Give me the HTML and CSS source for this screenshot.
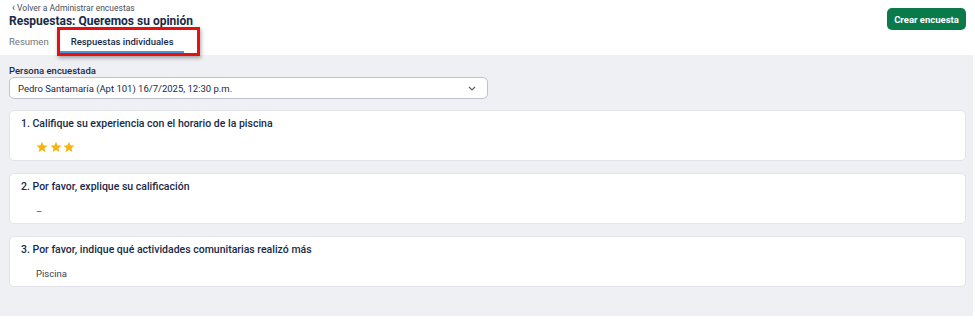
FILE: index.html
```html
<!DOCTYPE html>
<html lang="es">
<head>
<meta charset="utf-8">
<title>Respuestas: Queremos su opinión</title>
<link rel="stylesheet" href="styles.css">
</head>

<body>

<div id="page">
	<div class="header">
		<div class="header-top">
			<div class="header-text">
				<a class="back-link" href="#"><span class="back-chevron">&lsaquo;</span> Volver a Administrar encuestas</a>
				<h1 class="title">Respuestas: Queremos su opinión</h1>
			</div>
			<button class="button-create">Crear encuesta</button>
		</div>
		<ul class="tabs">
			<li class="tab">Resumen</li>
			<li class="tab tab-active"><span>Respuestas individuales</span></li>
		</ul>
	</div>

	<div class="content">
		<label class="field-label">Persona encuestada</label>
		<div class="select-box">
			<span>Pedro Santamaría (Apt 101) 16/7/2025, 12:30 p.m.</span>
			<svg class="chevron" width="8" height="5" viewBox="0 0 8 5"><path d="M1 1l3 3 3-3" fill="none" stroke="#5a6270" stroke-width="1.2"/></svg>
		</div>

		<div class="card">
			<h2 class="question">1. Califique su experiencia con el horario de la piscina</h2>
			<div class="answer stars">
				<svg width="12" height="12" viewBox="0 0 24 24"><path d="M12 1.5l3.1 7.1 7.7.7-5.8 5.1 1.7 7.6L12 18 5.3 22l1.7-7.6-5.8-5.1 7.7-.7z" fill="#f6b40e"/></svg>
				<svg width="12" height="12" viewBox="0 0 24 24"><path d="M12 1.5l3.1 7.1 7.7.7-5.8 5.1 1.7 7.6L12 18 5.3 22l1.7-7.6-5.8-5.1 7.7-.7z" fill="#f6b40e"/></svg>
				<svg width="12" height="12" viewBox="0 0 24 24"><path d="M12 1.5l3.1 7.1 7.7.7-5.8 5.1 1.7 7.6L12 18 5.3 22l1.7-7.6-5.8-5.1 7.7-.7z" fill="#f6b40e"/></svg>
			</div>
		</div>

		<div class="card">
			<h2 class="question">2. Por favor, explique su calificación</h2>
			<div class="answer answer-empty">–</div>
		</div>

		<div class="card">
			<h2 class="question">3. Por favor, indique qué actividades comunitarias realizó más</h2>
			<div class="answer">Piscina</div>
		</div>
	</div>
</div>

</body>
</html>
```

FILE: styles.css
```css
html {
	font-family: Roboto, 'Liberation Sans', sans-serif;
	color: rgb(24, 42, 70);
}

body {
	margin: 0;
	background-color: #fff;
}

#page {
	width: 973px;
	height: 316px;
	display: flex;
	flex-direction: column;
}

.header {
	padding: 0 7px 1px 9px;
	height: 55px;
	box-sizing: border-box;
	background-color: #fff;
}

.header-top {
	display: flex;
	justify-content: space-between;
	align-items: flex-start;
	height: 27px;
}

.header-text {
	display: flex;
	flex-direction: column;
}

.back-link {
	color: rgb(70, 78, 92);
	font-size: 8.5px;
	text-decoration: none;
	margin-top: 2px;
	line-height: 11px;
	padding-left: 3px;
}

.back-chevron {
	font-size: 10px;
}

.title {
	font-size: 12px;
	font-weight: bold;
	margin: 0;
	line-height: 14px;
}

.button-create {
	background-color: rgb(10, 122, 75);
	border: 0;
	border-radius: 5px;
	color: #fff;
	font-family: inherit;
	font-size: 9.5px;
	font-weight: bold;
	height: 22px;
	width: 79px;
	margin-top: 8px;
	padding: 0;
}

.tabs {
	display: flex;
	list-style: none;
	margin: 7px 0 0;
	padding: 0;
	height: 20px;
}

.tab {
	color: rgb(110, 117, 128);
	font-size: 9.5px;
	line-height: 16px;
	margin-right: 11px;
}

.tab-active {
	position: relative;
	color: rgb(24, 42, 70);
	font-weight: 500;
	padding: 0 10px 1px 11px;
	border-bottom: 2px solid rgb(77, 150, 218);
	height: 16px;
}

.tab-active::after {
	content: "";
	position: absolute;
	left: -3px;
	right: -16px;
	top: -7px;
	bottom: -5px;
	border: 3px solid rgb(230, 16, 16);
	box-shadow: 1px 2px 4px rgba(0, 0, 0, 0.35);
}

.content {
	flex: 1;
	background-color: rgb(239, 240, 244);
	padding: 9px 7px 0 9px;
	display: flex;
	flex-direction: column;
}

.field-label {
	font-size: 9.5px;
	font-weight: 500;
	line-height: 13px;
}

.select-box {
	width: 479px;
	height: 22px;
	box-sizing: border-box;
	background-color: #fff;
	border: 1px solid rgb(190, 195, 204);
	border-radius: 5px;
	display: flex;
	align-items: center;
	justify-content: space-between;
	padding: 0 11px 0 8px;
	font-size: 9.5px;
	margin-bottom: 11px;
}

.card {
	background-color: #fff;
	border: 1px solid rgb(226, 228, 233);
	border-radius: 5px;
	height: 51px;
	margin-bottom: 12px;
	box-sizing: border-box;
	padding: 6px 11px 0;
}

.question {
	font-size: 10.5px;
	font-weight: 500;
	margin: 0;
	line-height: 14px;
}

.answer {
	color: rgb(60, 66, 78);
	font-size: 9.5px;
	margin-top: 11px;
	padding-left: 15px;
	line-height: 12px;
}

.answer-empty {
	margin-top: 12px;
}

.stars {
	display: flex;
	gap: 1.5px;
	margin-top: 10px;
}
```
